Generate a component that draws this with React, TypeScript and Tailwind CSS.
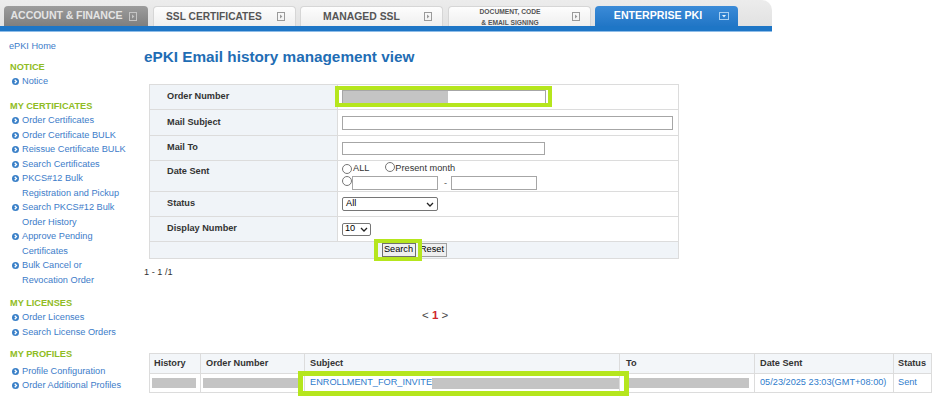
import React from "react";

function ArrowBox({ color }: { color: string }) {
  return (
    <svg width="8" height="9" viewBox="0 0 8 9" className="shrink-0">
      <rect x="0.5" y="0.5" width="7" height="8" fill="none" stroke={color} strokeWidth="1" />
      <path d="M3 2.6 L5.4 4.5 L3 6.4 Z" fill={color} />
    </svg>
  );
}

function DownBox() {
  return (
    <svg width="10" height="8" viewBox="0 0 10 8" className="shrink-0">
      <rect x="0.5" y="0.5" width="9" height="7" fill="none" stroke="#a9d0f2" strokeWidth="1" />
      <path d="M3 3 L7 3 L5 5.4 Z" fill="#e3f1fc" />
    </svg>
  );
}

function Bullet() {
  return (
    <svg width="7" height="7" viewBox="0 0 8 8" className="shrink-0 mt-[4px] mr-[3px]">
      <circle cx="4" cy="4" r="4" fill="#3a80c8" />
      <path d="M3.1 2.1 L5.1 4 L3.1 5.9" stroke="#fff" strokeWidth="1.5" fill="none" />
    </svg>
  );
}

function Item({ children }: { children: React.ReactNode }) {
  return (
    <div className="flex pl-[3px] text-[#3d7cc9]">
      <Bullet />
      <span>{children}</span>
    </div>
  );
}

function Heading({ children, cls }: { children: React.ReactNode; cls: string }) {
  return <div className={`pl-[1px] font-bold text-[#8fbc24] ${cls}`}>{children}</div>;
}

function Chevron() {
  return (
    <svg width="8" height="5" viewBox="0 0 8 5" className="shrink-0">
      <path d="M1 1 L4 4 L7 1" stroke="#222" strokeWidth="1.3" fill="none" />
    </svg>
  );
}

function Radio() {
  return <span className="inline-block w-[10px] h-[10px] rounded-full border border-[#767676] bg-white shrink-0" />;
}

function Label({ children, cls = "" }: { children: React.ReactNode; cls?: string }) {
  return (
    <div className={`w-[188px] shrink-0 bg-[#f0f4f8] border-r border-[#dcdcdc] pl-[17px] flex font-bold text-[#333] ${cls}`}>
      {children}
    </div>
  );
}

export default function App() {
  return (
    <div className="font-['Liberation_Sans',Arial,Helvetica,sans-serif] text-[9.2px] text-[#333] bg-white w-[936px] h-[396px] overflow-hidden">
      {/* top nav */}
      <div className="w-[772px]">
        <div className="h-[26px] bg-[linear-gradient(#ececec,#e2e2e2)] rounded-tr-[10px] flex items-end pl-[4px] gap-[4.5px]">
          <div className="w-[144px] h-[20px] rounded-t-[4px] bg-[linear-gradient(#9c9c9c,#7f7f7f)] flex items-center">
            <span className="flex-1 text-center font-bold text-[10.6px] text-[#e4e4e4] tracking-[-0.1px] pl-[2px]">ACCOUNT &amp; FINANCE</span>
            <span className="mr-[11px] ml-[2px]"><ArrowBox color="#c4c4c4" /></span>
          </div>
          <div className="w-[143px] h-[20px] rounded-t-[4px] bg-[linear-gradient(#fdfdfd,#efefef)] border border-b-0 border-[#d6d6d6] flex items-center">
            <span className="flex-1 text-center font-bold text-[10.2px] text-[#555]">SSL CERTIFICATES</span>
            <span className="mr-[10px] ml-[2px]"><ArrowBox color="#9a9a9a" /></span>
          </div>
          <div className="w-[143px] h-[20px] rounded-t-[4px] bg-[linear-gradient(#fdfdfd,#efefef)] border border-b-0 border-[#d6d6d6] flex items-center">
            <span className="flex-1 text-center font-bold text-[10.4px] text-[#555]">MANAGED SSL</span>
            <span className="mr-[10px] ml-[2px]"><ArrowBox color="#9a9a9a" /></span>
          </div>
          <div className="w-[143px] h-[20px] rounded-t-[4px] bg-[linear-gradient(#fdfdfd,#efefef)] border border-b-0 border-[#d6d6d6] flex items-center">
            <span className="flex-1 text-center font-bold text-[6.7px] leading-[11px] text-[#555] pl-[2px]">
              DOCUMENT, CODE
              <br />
              &amp; EMAIL SIGNING
            </span>
            <span className="mr-[10px] ml-[2px]"><ArrowBox color="#9a9a9a" /></span>
          </div>
          <div className="w-[143px] h-[20px] rounded-t-[4px] bg-[linear-gradient(#3b8bd8,#2176c6)] flex items-center">
            <span className="flex-1 text-center font-bold text-[10.6px] text-white pl-[6px]">ENTERPRISE PKI</span>
            <span className="mr-[9px] ml-[4px]"><DownBox /></span>
          </div>
        </div>
        <div className="h-[6px] bg-[#1e76c6] border-b border-[#8fbde8]" />
      </div>

      <div className="flex">
        {/* sidebar */}
        <div className="w-[140px] shrink-0 pl-[9px] pt-[7px] leading-[14.5px]">
          <div className="text-[#3d7cc9]">ePKI Home</div>
          <Heading cls="mt-[6px]">NOTICE</Heading>
          <Item>Notice</Item>
          <Heading cls="mt-[10px]">MY CERTIFICATES</Heading>
          <Item>Order Certificates</Item>
          <Item>Order Certificate BULK</Item>
          <Item>Reissue Certificate BULK</Item>
          <Item>Search Certificates</Item>
          <Item>
            PKCS#12 Bulk
            <br />
            Registration and Pickup
          </Item>
          <Item>
            Search PKCS#12 Bulk
            <br />
            Order History
          </Item>
          <Item>
            Approve Pending
            <br />
            Certificates
          </Item>
          <Item>
            Bulk Cancel or
            <br />
            Revocation Order
          </Item>
          <Heading cls="mt-[8.5px]">MY LICENSES</Heading>
          <Item>Order Licenses</Item>
          <Item>Search License Orders</Item>
          <Heading cls="mt-[7.5px] mb-[2.5px]">MY PROFILES</Heading>
          <Item>Profile Configuration</Item>
          <Item>Order Additional Profiles</Item>
        </div>

        {/* main */}
        <div className="flex-1 pl-[4px]">
          <h1 className="mt-[16px] leading-[18px] text-[15.3px] font-bold text-[#1f6db4]">ePKI Email history management view</h1>

          <div className="mt-[18px] ml-[5px] w-[530px] border border-[#dcdcdc]">
            <div className="flex h-[24px]">
              <Label cls="items-center">Order Number</Label>
              <div className="flex-1 pl-[4px] flex items-center">
                <div className="relative w-[204px] h-[15px] border border-[#a6a6a6] bg-white">
                  <div className="absolute left-0 top-0 bottom-0 w-[105px] bg-[#c4c4c4]" />
                  <div className="absolute left-[-8px] right-[-7px] top-[-5px] bottom-[-3px] border-[4px] border-[#b5e61d]" />
                </div>
              </div>
            </div>
            <div className="flex h-[26px] border-t border-[#dcdcdc]">
              <Label cls="items-center">Mail Subject</Label>
              <div className="flex-1 pl-[4px] flex items-center">
                <div className="w-[331px] h-[14px] border border-[#a6a6a6] bg-white" />
              </div>
            </div>
            <div className="flex h-[25px] border-t border-[#dcdcdc]">
              <Label cls="items-center">Mail To</Label>
              <div className="flex-1 pl-[4px] flex items-center">
                <div className="w-[203px] h-[13px] border border-[#a6a6a6] bg-white" />
              </div>
            </div>
            <div className="flex h-[31px] border-t border-[#dcdcdc]">
              <Label cls="items-start pt-[5px] leading-[11px]">Date Sent</Label>
              <div className="flex-1 pl-[4px] pt-[2px] flex flex-col">
                <div className="flex items-center h-[11px] leading-[11px]">
                  <Radio />
                  <span className="ml-[1px] text-[#333]">ALL</span>
                  <span className="ml-[16px]"><Radio /></span>
                  <span className="ml-[0px] text-[#333]">Present month</span>
                </div>
                <div className="flex items-start mt-[2px]">
                  <Radio />
                  <div className="w-[86px] h-[14px] border border-[#a6a6a6] bg-white" />
                  <span className="ml-[6px] mr-[4px] leading-[14px] text-[#555]">-</span>
                  <div className="w-[86px] h-[14px] border border-[#a6a6a6] bg-white" />
                </div>
              </div>
            </div>
            <div className="flex h-[25px] border-t border-[#dcdcdc]">
              <Label cls="items-center">Status</Label>
              <div className="flex-1 pl-[4px] flex items-center">
                <div className="w-[96px] h-[14px] border border-[#767676] rounded-[2px] bg-white flex items-center pl-[3px] pr-[3px] text-black">
                  <span className="flex-1">All</span>
                  <Chevron />
                </div>
              </div>
            </div>
            <div className="flex h-[25px] border-t border-[#dcdcdc]">
              <Label cls="items-center">Display Number</Label>
              <div className="flex-1 pl-[4px] flex items-center">
                <div className="w-[29px] h-[13px] border border-[#767676] rounded-[2px] bg-white flex items-center pl-[2px] pr-[2px] text-black">
                  <span className="flex-1">10</span>
                  <Chevron />
                </div>
              </div>
            </div>
            <div className="flex h-[17px] border-t border-[#dcdcdc] bg-[#f0f4f8] items-center justify-center gap-[2px]">
              <div className="relative w-[34px] h-[14px] border border-[#6f6f6f] bg-[#efefef] flex items-center justify-center text-black">
                Search
                <div className="absolute left-[-9px] right-[-7px] top-[-5px] bottom-[-5px] border-[4px] border-[#b5e61d] z-10" />
              </div>
              <div className="w-[29px] h-[14px] border border-[#a0a0a0] bg-[#efefef] flex items-center justify-center text-black">Reset</div>
            </div>
          </div>

          <div className="mt-[7px] leading-[12px] text-[#333]">1 - 1 /1</div>

          <div className="mt-[30px] ml-[278px] leading-[14px] text-[11.5px] text-[#444]">
            &lt; <span className="font-bold text-[#d0262b]">1</span> &gt;
          </div>

          <div className="relative mt-[31px] ml-[5px] w-[783px] border border-[#dcdcdc]">
            <div className="grid grid-cols-[51px_104px_315px_135px_139px_37px] h-[20px] bg-[#f3f6f9] border-b border-[#dcdcdc] font-bold text-[#333]">
              <div className="border-r border-[#dcdcdc] pl-[4px] flex items-center">History</div>
              <div className="border-r border-[#dcdcdc] pl-[5px] flex items-center">Order Number</div>
              <div className="border-r border-[#dcdcdc] pl-[5px] flex items-center">Subject</div>
              <div className="border-r border-[#dcdcdc] pl-[6px] flex items-center">To</div>
              <div className="border-r border-[#dcdcdc] pl-[5px] flex items-center">Date Sent</div>
              <div className="pl-[4px] flex items-center">Status</div>
            </div>
            <div className="grid grid-cols-[51px_104px_315px_135px_139px_37px] h-[18px] text-[#2f7ccc]">
              <div className="border-r border-[#dcdcdc] pl-[2px] flex items-center">
                <div className="w-[44px] h-[10px] bg-[#c4c4c4]" />
              </div>
              <div className="border-r border-[#dcdcdc] pl-[2px] flex items-center">
                <div className="w-[99px] h-[10px] bg-[#c4c4c4]" />
              </div>
              <div className="border-r border-[#dcdcdc] pl-[5px] flex items-center">
                <span>ENROLLMENT_FOR_INVITE</span>
                <div className="w-[190px] h-[11px] bg-[#c4c4c4]" />
              </div>
              <div className="border-r border-[#dcdcdc] pl-[9px] flex items-center">
                <div className="w-[120px] h-[10px] bg-[#c4c4c4]" />
              </div>
              <div className="border-r border-[#dcdcdc] pl-[5px] flex items-center">05/23/2025 23:03(GMT+08:00)</div>
              <div className="pl-[4px] flex items-center">Sent</div>
            </div>
            <div className="absolute left-[148px] top-[17px] w-[331px] h-[25px] border-[5px] border-[#b5e61d]" />
          </div>
        </div>
      </div>
    </div>
  );
}
